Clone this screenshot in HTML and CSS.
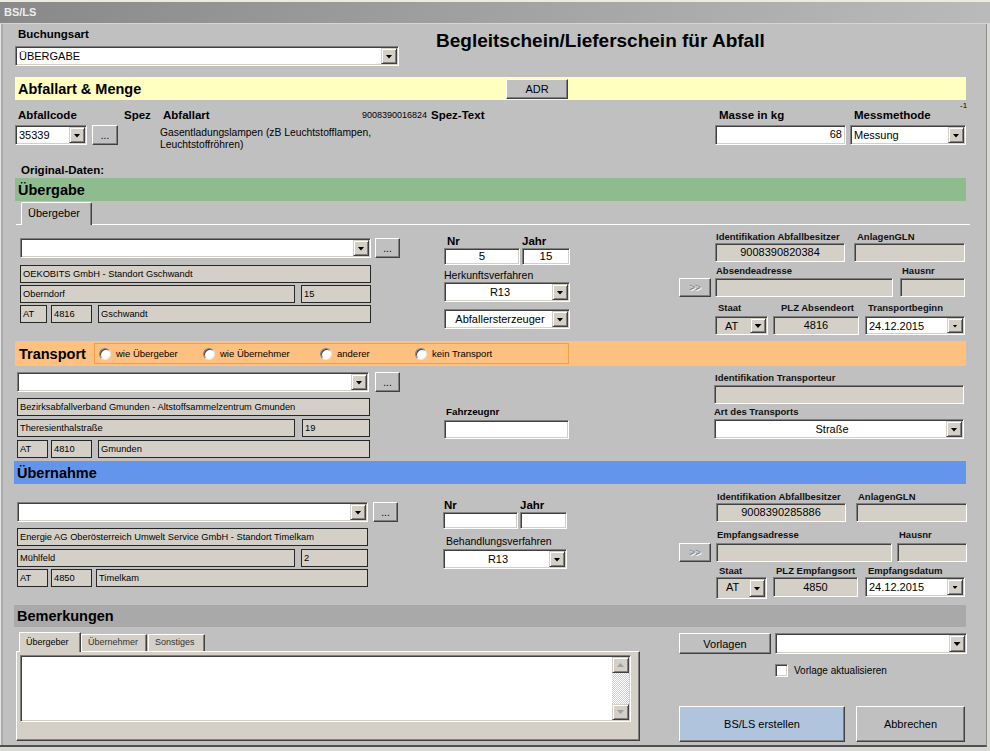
FILE: index.html
```html
<!DOCTYPE html>
<html lang="de">
<head>
<meta charset="utf-8">
<title>BS/LS</title>
<link rel="stylesheet" href="styles.css">
</head>
<body>
<div class="win">
  <div class="titlebar">BS/LS</div>
  <div class="client">

    <div class="head">
      <div class="buchung">
        <div class="lbl">Buchungsart</div>
        <div class="combo c-buch"><span class="v">ÜBERGABE</span><span class="dd"></span></div>
      </div>
      <h1 class="title">Begleitschein/Lieferschein für Abfall</h1>
    </div>

    <div class="band yellow"><span class="bt bt-abf">Abfallart &amp; Menge</span><button type="button" class="btn adr">ADR</button></div>

    <div class="abfall">
      <div class="alabels">
        <span class="lbl l-code">Abfallcode</span>
        <span class="lbl l-spez">Spez</span>
        <span class="lbl l-art">Abfallart</span>
        <span class="l-num">9008390016824</span>
        <span class="lbl l-stext">Spez-Text</span>
        <span class="lbl l-masse">Masse in kg</span>
        <span class="lbl l-mess">Messmethode</span>
        <span class="sup">-1</span>
      </div>
      <div class="actrl">
        <div class="combo c-code"><span class="v">35339</span><span class="dd"></span></div>
        <button type="button" class="btn dots d-code">...</button>
        <div class="arttext">Gasentladungslampen (zB Leuchtstofflampen,<br>Leuchtstoffröhren)</div>
        <div class="inp c-masse">68</div>
        <div class="combo c-mess"><span class="v">Messung</span><span class="dd"></span></div>
      </div>
      <div class="lbl orig">Original-Daten:</div>
    </div>

    <div class="band green"><span class="bt">Übergabe</span></div>

    <div class="tabstrip"><div class="tab">Übergeber</div></div>

    <div class="sec ueb">
      <div class="lcol">
        <div class="row">
          <div class="combo cm"><span class="v"></span><span class="dd"></span></div>
          <button type="button" class="btn dots dm">...</button>
        </div>
        <div class="ro fname">OEKOBITS GmbH - Standort Gschwandt</div>
        <div class="row r2"><div class="ro fstr">Oberndorf</div><div class="ro fhnr">15</div></div>
        <div class="row r3"><div class="ro fctry">AT</div><div class="ro fplz">4816</div><div class="ro fort">Gschwandt</div></div>
      </div>
      <div class="mcol">
        <div class="nrl"><span class="lbl nr">Nr</span><span class="lbl">Jahr</span></div>
        <div class="row"><div class="inp nri1">5</div><div class="inp nri2">15</div></div>
        <div class="sub">Herkunftsverfahren</div>
        <div class="combo mc1"><span class="v c">R13</span><span class="dd"></span></div>
        <div class="combo mc2"><span class="v c">Abfallersterzeuger</span><span class="dd"></span></div>
      </div>
      <div class="rcol">
        <div class="rl rl1"><span class="k1">Identifikation Abfallbesitzer</span><span>AnlagenGLN</span></div>
        <div class="rr rr1"><div class="fld fid">9008390820384</div><div class="fld fgln"></div></div>
        <div class="rl rl2"><span class="k2">Absendeadresse</span><span>Hausnr</span></div>
        <div class="rr rr2"><button type="button" class="btn arr">&gt;&gt;</button><div class="fld fadr"></div><div class="fld fhn"></div></div>
        <div class="rl rl3"><span class="k3">Staat</span><span class="k4">PLZ Absendeort</span><span>Transportbeginn</span></div>
        <div class="rr rr3">
          <div class="combo gray fst"><span class="v">AT</span><span class="dd"></span></div>
          <div class="fld fplz2">4816</div>
          <div class="combo fdate"><span class="v">24.12.2015</span><span class="dd sm"></span></div>
        </div>
      </div>
    </div>

    <div class="band orange">
      <span class="bt bt-tr">Transport</span>
      <div class="rgroup">
        <span class="rad ra1"><span class="rc"></span>wie Übergeber</span>
        <span class="rad ra2"><span class="rc"></span>wie Übernehmer</span>
        <span class="rad ra3"><span class="rc"></span>anderer</span>
        <span class="rad"><span class="rc"></span>kein Transport</span>
      </div>
    </div>

    <div class="sec trn">
      <div class="lcol">
        <div class="row">
          <div class="combo cm"><span class="v"></span><span class="dd"></span></div>
          <button type="button" class="btn dots dm">...</button>
        </div>
        <div class="ro fname">Bezirksabfallverband Gmunden - Altstoffsammelzentrum Gmunden</div>
        <div class="row r2"><div class="ro fstr">Theresienthalstraße</div><div class="ro fhnr">19</div></div>
        <div class="row r3"><div class="ro fctry">AT</div><div class="ro fplz">4810</div><div class="ro fort">Gmunden</div></div>
      </div>
      <div class="mcol">
        <div class="lbl2 fz">Fahrzeugnr</div>
        <div class="inp fzi"></div>
      </div>
      <div class="rcol">
        <div class="rl tl1">Identifikation Transporteur</div>
        <div class="fld tf"></div>
        <div class="rl tl2">Art des Transports</div>
        <div class="combo tc"><span class="v c">Straße</span><span class="dd"></span></div>
      </div>
    </div>

    <div class="band blue"><span class="bt">Übernahme</span></div>

    <div class="sec ubn">
      <div class="lcol">
        <div class="row">
          <div class="combo cm"><span class="v"></span><span class="dd"></span></div>
          <button type="button" class="btn dots dm">...</button>
        </div>
        <div class="ro fname">Energie AG Oberösterreich Umwelt Service GmbH - Standort Timelkam</div>
        <div class="row r2"><div class="ro fstr">Mühlfeld</div><div class="ro fhnr">2</div></div>
        <div class="row r3"><div class="ro fctry">AT</div><div class="ro fplz">4850</div><div class="ro fort">Timelkam</div></div>
      </div>
      <div class="mcol">
        <div class="nrl"><span class="lbl nr">Nr</span><span class="lbl">Jahr</span></div>
        <div class="row"><div class="inp nri1"></div><div class="inp nri2"></div></div>
        <div class="sub">Behandlungsverfahren</div>
        <div class="combo mc1"><span class="v c">R13</span><span class="dd"></span></div>
      </div>
      <div class="rcol">
        <div class="rl rl1"><span class="k1">Identifikation Abfallbesitzer</span><span>AnlagenGLN</span></div>
        <div class="rr rr1"><div class="fld fid">9008390285886</div><div class="fld fgln"></div></div>
        <div class="rl rl2"><span class="k2">Empfangsadresse</span><span>Hausnr</span></div>
        <div class="rr rr2"><button type="button" class="btn arr">&gt;&gt;</button><div class="fld fadr"></div><div class="fld fhn"></div></div>
        <div class="rl rl3"><span class="k3">Staat</span><span class="k4">PLZ Empfangsort</span><span>Empfangsdatum</span></div>
        <div class="rr rr3">
          <div class="combo gray fst"><span class="v">AT</span><span class="dd"></span></div>
          <div class="fld fplz2">4850</div>
          <div class="combo fdate"><span class="v">24.12.2015</span><span class="dd sm"></span></div>
        </div>
      </div>
    </div>

    <div class="band gray"><span class="bt">Bemerkungen</span></div>

    <div class="bottom">
      <div class="notes">
        <div class="ntabs">
          <div class="ntab on">Übergeber</div>
          <div class="ntab">Übernehmer</div>
          <div class="ntab">Sonstiges</div>
        </div>
        <div class="npanel">
          <div class="memo">
            <div class="sb"><span class="sbb up"></span><span class="sbt"></span><span class="sbb dn"></span></div>
          </div>
        </div>
      </div>
      <div class="actions">
        <div class="row">
          <button type="button" class="btn vorl">Vorlagen</button>
          <div class="combo vcombo"><span class="v"></span><span class="dd"></span></div>
        </div>
        <div class="chkrow"><span class="chk"></span><span class="chkl">Vorlage aktualisieren</span></div>
        <div class="row brow">
          <button type="button" class="btn create">BS/LS erstellen</button>
          <button type="button" class="btn cancel">Abbrechen</button>
        </div>
      </div>
    </div>

  </div>
</div>
</body>
</html>
```

FILE: styles.css
```css
* { box-sizing: border-box; margin: 0; padding: 0; }
body { margin: 0; background: #d4d0c8; font-family: "Liberation Sans", Arial, sans-serif; font-size: 11px; color: #000; }

.win { width: 990px; height: 751px; background: #d8d8d4; overflow: hidden; }
.titlebar { height: 24px; border-top: 2px solid #eeeae0; border-bottom: 1px solid #d6d6cc; background: linear-gradient(to right, #898989, #bababa); color: #ededed; font-weight: bold; font-size: 11px; line-height: 21px; padding-left: 4px; }
.client { width: 987px; height: 723px; background: #c0c0c0; border-right: 1px solid #8a8a8a; border-bottom: 2px solid #505050; box-shadow: inset 1px 0 #e6e6e6, inset 3px 0 #ababab; }
.client > div { display: flow-root; }
.client > .head, .client > .band, .client > .sec, .client > .bottom, .client > .tabstrip { display: flex; }

.row { display: flex; align-items: flex-start; }
.lbl { font-weight: bold; font-size: 11.5px; line-height: 13px; white-space: nowrap; }

/* sunken controls */
.combo, .inp, .fld, .memo, .chk {
  border: 1px solid; border-color: #808080 #fff #fff #808080;
  box-shadow: inset 1px 1px #404040, inset -1px -1px #d4d0c8;
}
.combo { display: flex; height: 20px; background: #fff; padding: 1px; flex: none; }
.combo.gray { background: #d4d0c8; }
.combo .v { flex: 1; padding-left: 2px; line-height: 16px; font-size: 11px; white-space: nowrap; overflow: hidden; }
.combo .v.c { text-align: center; }
.dd { width: 16px; flex: none; display: flex; align-items: center; justify-content: center; background: #d4d0c8; border: 1px solid; border-color: #d4d0c8 #404040 #404040 #d4d0c8; box-shadow: inset 1px 1px #fff, inset -1px -1px #808080; }
.dd::after { content: ""; width: 7px; height: 4px; background: #000; clip-path: polygon(0 0, 100% 0, 50% 100%); margin-top: 1px; }
.dd.sm::after { width: 5px; height: 3px; }
.inp { background: #fff; height: 20px; font-size: 11.5px; line-height: 17px; flex: none; }
.fld { background: #d4d0c8; height: 19px; font-size: 11px; line-height: 17px; text-align: center; flex: none; }
.ro { height: 18px; background: #d4d0c8; border: 1px solid #262626; font-size: 9.3px; line-height: 16px; padding-left: 2px; white-space: nowrap; overflow: hidden; flex: none; }

/* raised buttons */
.btn { display: flex; align-items: center; justify-content: center; flex: none; font-family: inherit; font-size: 11px; color: #000; background: #c0c0c0; border: 1px solid; border-color: #fff #404040 #404040 #fff; box-shadow: inset -1px -1px #808080; height: 20px; padding: 0; appearance: none; }
.dots { width: 25px; align-items: flex-end; padding-bottom: 3px; font-size: 10px; }
.arr { width: 32px; height: 19px; color: #808080; text-shadow: 1px 1px #fff; font-size: 10px; }

/* header */
.head { height: 53px; align-items: flex-start; }
.buchung { margin-left: 15px; width: 384px; padding-top: 4px; }
.buchung .lbl { margin-left: 3px; }
.c-buch { margin-top: 5px; width: 384px; }
.title { margin-left: 37px; margin-top: 6px; font-size: 19px; font-weight: bold; line-height: 22px; white-space: nowrap; }

/* bands */
.band { align-items: center; font-weight: bold; font-size: 14.5px; white-space: nowrap; }
.bt { padding-left: 3px; }
.yellow { height: 23px; margin-left: 15px; width: 951px; background: #ffffc0; }
.bt-abf { width: 491px; }
.adr { width: 62px; height: 20px; font-weight: normal; }
.green { height: 23px; margin-left: 15px; width: 951px; background: #8fbc8f; }
.orange { height: 25px; margin-left: 15px; width: 951px; background: #ffc080; }
.blue { height: 23px; margin-left: 14px; width: 952px; background: #6495ed; }
.gray { height: 22px; margin-left: 14px; width: 952px; background: #a9a9a9; }

/* abfall */
.abfall { height: 78px; }
.alabels { display: flex; align-items: flex-start; margin-top: 8px; height: 14px; }
.alabels > span { line-height: 14px; }
.l-code { margin-left: 18px; width: 106px; }
.l-spez { width: 39px; }
.l-art { width: 199px; }
.l-num { width: 69px; font-size: 9px; }
.l-stext { width: 288px; }
.l-masse { width: 135px; }
.l-mess { width: 106px; }
.alabels .sup { font-size: 8px; line-height: 8px; margin-top: -6px; }
.actrl { display: flex; align-items: flex-start; margin-top: 3px; }
.c-code { margin-left: 15px; width: 72px; }
.d-code { margin-left: 5px; width: 26px; }
.arttext { margin-left: 42px; width: 300px; padding-top: 2px; line-height: 12px; font-size: 10.3px; flex: none; }
.c-masse { margin-left: 255px; width: 131px; text-align: right; padding-right: 3px; font-size: 11px; }
.c-mess { margin-left: 4px; width: 116px; }
.orig { margin-top: 12px; margin-left: 21px; line-height: 14px; }

/* tab strip */
.tabstrip { height: 24px; margin-left: 16px; width: 954px; border-bottom: 1px solid #fff; align-items: flex-start; }
.tab { margin-left: 5px; margin-top: 1px; width: 71px; height: 23px; background: #c0c0c0; border-left: 1px solid #fff; border-top: 1px solid #fff; border-right: 1px solid #404040; box-shadow: inset -1px 0 #808080; border-radius: 2px 2px 0 0; padding-left: 6px; line-height: 20px; font-size: 11px; }

/* sections */
.sec { align-items: flex-start; }
.ueb { height: 116px; }
.trn { height: 95px; }
.ubn { height: 121px; }

.lcol { flex: none; }
.ueb .lcol { margin-left: 20px; width: 380px; margin-top: 13px; }
.trn .lcol { margin-left: 17px; width: 383px; margin-top: 6px; }
.ubn .lcol { margin-left: 17px; width: 381px; margin-top: 18px; }

.ueb .cm { width: 351px; } .ueb .dm { margin-left: 4px; }
.trn .cm { width: 352px; } .trn .dm { margin-left: 6px; }
.ubn .cm { width: 351px; } .ubn .dm { margin-left: 5px; }

.ueb .fname { margin-top: 7px; width: 351px; }
.trn .fname, .ubn .fname { margin-top: 6px; }
.trn .fname { width: 353px; }
.ubn .fname { width: 351px; }

.ueb .r2 { margin-top: 2px; } .ueb .r3 { margin-top: 2px; }
.trn .r2 { margin-top: 3px; } .trn .r3 { margin-top: 3px; }
.ubn .r2 { margin-top: 3px; } .ubn .r3 { margin-top: 2px; }

.ueb .fstr { width: 275px; } .ueb .fhnr { margin-left: 6px; width: 70px; }
.trn .fstr { width: 278px; } .trn .fhnr { margin-left: 7px; width: 68px; }
.ubn .fstr { width: 278px; } .ubn .fhnr { margin-left: 6px; width: 67px; }

.ueb .fctry { width: 27px; } .ueb .fplz { margin-left: 4px; width: 41px; } .ueb .fort { margin-left: 6px; width: 273px; }
.trn .fctry { width: 31px; } .trn .fplz { margin-left: 3px; width: 41px; } .trn .fort { margin-left: 6px; width: 272px; }
.ubn .fctry { width: 31px; } .ubn .fplz { margin-left: 3px; width: 41px; } .ubn .fort { margin-left: 4px; width: 272px; }

/* middle column */
.mcol { flex: none; }
.ueb .mcol { margin-left: 44px; width: 126px; margin-top: 10px; }
.trn .mcol { margin-left: 44px; width: 126px; margin-top: 39px; }
.ubn .mcol { margin-left: 45px; width: 125px; margin-top: 15px; }
.nrl { display: flex; }
.nrl .nr { width: 78px; padding-left: 3px; }
.ubn .nrl .nr { width: 77px; padding-left: 1px; }
.nri1, .nri2 { height: 17px; text-align: center; line-height: 15px; }
.ueb .nri1 { width: 76px; } .ueb .nri2 { margin-left: 2px; width: 48px; }
.ubn .nri1 { width: 75px; } .ubn .nri2 { margin-left: 2px; width: 47px; }
.sub { margin-top: 4px; line-height: 13px; font-size: 10.5px; }
.ubn .sub { margin-top: 6px; padding-left: 3px; }
.ueb .mc1, .ueb .mc2 { width: 126px; }
.ueb .mc2 { margin-top: 7px; }
.ubn .mc1 { width: 124px; margin-top: 1px; }
.lbl2 { font-weight: bold; font-size: 9.8px; line-height: 13px; }
.fz { padding-left: 2px; }
.fzi { margin-top: 2px; width: 125px; height: 19px; }

/* right column */
.rcol { flex: none; }
.ueb .rcol { margin-left: 109px; width: 287px; margin-top: 6px; }
.ubn .rcol { margin-left: 111px; width: 288px; margin-top: 7px; }
.trn .rcol { margin-left: 144px; width: 251px; margin-top: 6px; }
.rl { display: flex; font-weight: bold; font-size: 9.5px; line-height: 12px; color: #111; white-space: nowrap; }
.rr { display: flex; align-items: flex-start; }

.ueb .rl1 { padding-left: 37px; } .rl1 .k1 { width: 141px; }
.ueb .fid { margin-left: 36px; width: 130px; } .ueb .fgln { margin-left: 9px; width: 111px; }
.ueb .rl2 { margin-top: 3px; padding-left: 37px; } .ueb .k2 { width: 186px; }
.ueb .rr2 { margin-top: 1px; }
.ueb .fadr { margin-left: 4px; width: 178px; } .ueb .fhn { margin-left: 7px; width: 65px; }
.ueb .rl3 { margin-top: 5px; padding-left: 39px; } .ueb .k3 { width: 63px; } .ueb .k4 { width: 87px; }
.ueb .rr3 { margin-top: 2px; }
.ueb .fst { margin-left: 36px; width: 53px; height: 19px; } .ueb .fplz2 { margin-left: 5px; width: 86px; } .ueb .fdate { margin-left: 6px; width: 100px; height: 19px; }

.ubn .rl1 { padding-left: 38px; }
.ubn .fid { margin-left: 37px; width: 130px; } .ubn .fgln { margin-left: 10px; width: 111px; }
.ubn .rl2 { margin-top: 7px; padding-left: 38px; } .ubn .k2 { width: 182px; }
.ubn .rr2 { margin-top: 2px; }
.ubn .fadr { margin-left: 5px; width: 176px; } .ubn .fhn { margin-left: 5px; width: 70px; }
.ubn .rl3 { margin-top: 3px; padding-left: 40px; } .ubn .k3 { width: 57px; } .ubn .k4 { width: 92px; }
.ubn .fst { margin-left: 37px; width: 51px; } .ubn .fplz2 { margin-left: 6px; width: 85px; height: 20px; line-height: 18px; } .ubn .fdate { margin-left: 7px; width: 100px; }

.fst .v { padding-left: 8px; }

.tl1 { padding-left: 1px; }
.tf { margin-top: 1px; width: 250px; }
.tl2 { margin-top: 1px; line-height: 13px; }
.tc { margin-top: 1px; width: 250px; }

/* transport radios */
.bt-tr { width: 79px; padding-left: 4px; }
.rgroup { width: 475px; height: 21px; border: 1px solid #f0a048; display: flex; align-items: center; padding-left: 4px; font-weight: normal; font-size: 9.5px; }
.rad { display: flex; align-items: center; gap: 5px; flex: none; }
.ra1 { width: 104px; } .ra2 { width: 117px; } .ra3 { width: 95px; }
.rc { width: 12px; height: 12px; border-radius: 50%; background: #fff; border: 1px solid; border-color: #808080 #e8e8e8 #e8e8e8 #808080; box-shadow: inset 1px 1px #404040; flex: none; }

/* bottom */
.bottom { height: 118px; align-items: flex-start; }
.notes { margin-left: 16px; width: 624px; margin-top: 5px; flex: none; }
.ntabs { display: flex; align-items: flex-end; height: 19px; padding-left: 3px; position: relative; z-index: 1; }
.ntab { height: 17px; padding: 0 6px; line-height: 15px; font-size: 9px; color: #333; background: #d4d0c8; border: 1px solid; border-bottom: none; border-color: #fff #404040 #fff #fff; box-shadow: inset -1px 0 #808080; }
.ntab.on { height: 20px; align-self: flex-start; margin-bottom: -1px; width: 62px; color: #000; padding-top: 2px; }
.ntab:nth-child(2) { width: 66px; }
.ntab:nth-child(3) { width: 57px; margin-left: 1px; }
.npanel { height: 90px; background: #d4d0c8; border: 1px solid; border-color: #fff #404040 #404040 #fff; box-shadow: inset -1px -1px #808080; padding: 3px 8px 0 3px; }
.memo { height: 67px; background: #fff; display: flex; justify-content: flex-end; padding: 1px; }
.sb { width: 17px; display: flex; flex-direction: column; }
.sbb { height: 16px; flex: none; display: flex; align-items: center; justify-content: center; background: #d4d0c8; border: 1px solid; border-color: #d4d0c8 #404040 #404040 #d4d0c8; box-shadow: inset 1px 1px #fff, inset -1px -1px #808080; }
.sbb::after { content: ""; width: 7px; height: 4px; background: #a0a0a0; }
.sbb.up::after { clip-path: polygon(50% 0, 100% 100%, 0 100%); }
.sbb.dn::after { clip-path: polygon(0 0, 100% 0, 50% 100%); }
.sbt { flex: 1; background: repeating-conic-gradient(#fff 0 25%, #d4d0c8 0 50%) 0 0 / 2px 2px; }

.actions { margin-left: 39px; width: 288px; margin-top: 6px; flex: none; }
.vorl { width: 92px; height: 21px; }
.vcombo { margin-left: 4px; width: 192px; height: 21px; }
.chkrow { margin-top: 10px; display: flex; align-items: center; padding-left: 96px; height: 13px; }
.chk { width: 13px; height: 13px; background: #fff; flex: none; }
.chkl { margin-left: 6px; font-size: 10px; }
.brow { margin-top: 29px; }
.create { width: 166px; height: 36px; background: #b0c4de; }
.cancel { margin-left: 11px; width: 109px; height: 36px; }
```
